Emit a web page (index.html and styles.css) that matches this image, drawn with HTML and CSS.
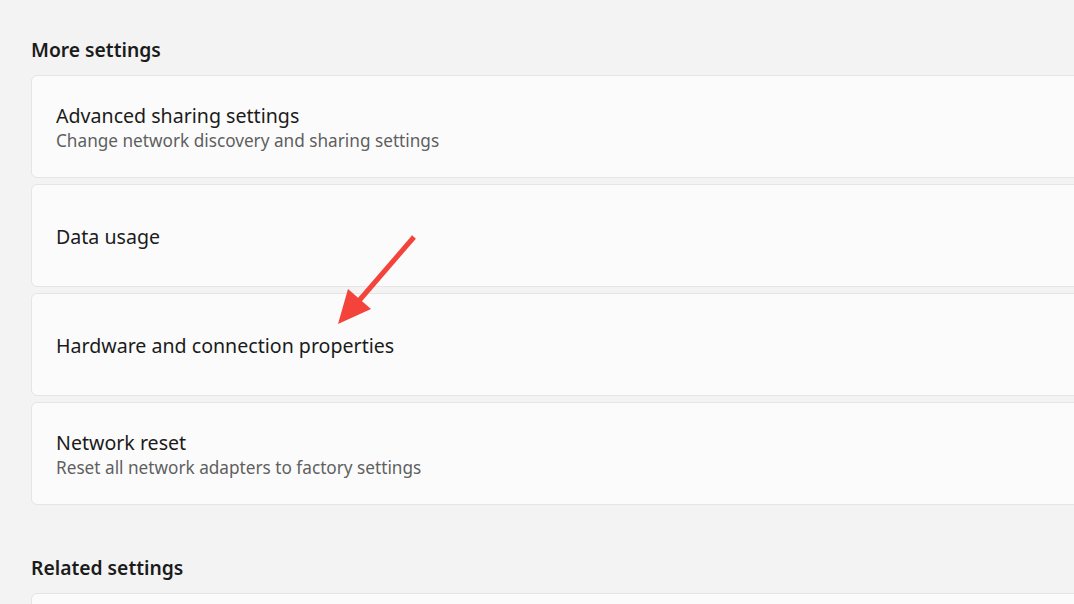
FILE: index.html
```html
<!DOCTYPE html>
<html>
<head>
<meta charset="utf-8">
<link rel="stylesheet" href="styles.css">
</head>
<body>
<div class="page">
  <h2 class="section-title">More settings</h2>
  <div class="list">
    <div class="card">
      <div class="card-title">Advanced sharing settings</div>
      <div class="card-desc">Change network discovery and sharing settings</div>
    </div>
    <div class="card">
      <div class="card-title">Data usage</div>
    </div>
    <div class="card">
      <div class="card-title">Hardware and connection properties</div>
    </div>
    <div class="card">
      <div class="card-title">Network reset</div>
      <div class="card-desc">Reset all network adapters to factory settings</div>
    </div>
  </div>
  <h2 class="section-title related">Related settings</h2>
  <div class="list">
    <div class="card"></div>
  </div>
</div>
<svg class="arrow" width="1074" height="604" viewBox="0 0 1074 604">
  <line x1="414" y1="237" x2="357" y2="303" stroke="#f4433b" stroke-width="5" stroke-linecap="butt"/>
  <polygon points="338,324 348,289 371,309" fill="#f4433b"/>
</svg>
</body>
</html>
```
FILE: styles.css
```css
html, body {
  margin: 0;
  padding: 0;
}
body {
  background: #f3f3f3;
  font-family: "Segoe UI", "Noto Sans", "Open Sans", sans-serif;
  color: #1b1b1b;
  width: 1074px;
  height: 604px;
  overflow: hidden;
  position: relative;
}
.page {
  padding: 36px 0 0 31px;
}
.section-title {
  margin: 0 0 11px 0;
  font-size: 19.3px;
  line-height: 28px;
  font-weight: 600;
}
.section-title.related {
  margin-top: 49px;
  margin-bottom: 11px;
}
.list {
  display: flex;
  flex-direction: column;
  gap: 6px;
  margin-right: -20px;
}
.card {
  height: 98px;
  background: #fbfbfb;
  border: 1.5px solid #e5e5e5;
  border-radius: 6px;
  padding-left: 24px;
  padding-top: 3px;
  display: flex;
  flex-direction: column;
  justify-content: center;
}
.card-title {
  font-size: 19.6px;
  line-height: 26px;
}
.card-desc {
  font-size: 17.2px;
  line-height: 24px;
  color: #5f5f5f;
}
.arrow {
  position: absolute;
  left: 0;
  top: 0;
  pointer-events: none;
}
```
